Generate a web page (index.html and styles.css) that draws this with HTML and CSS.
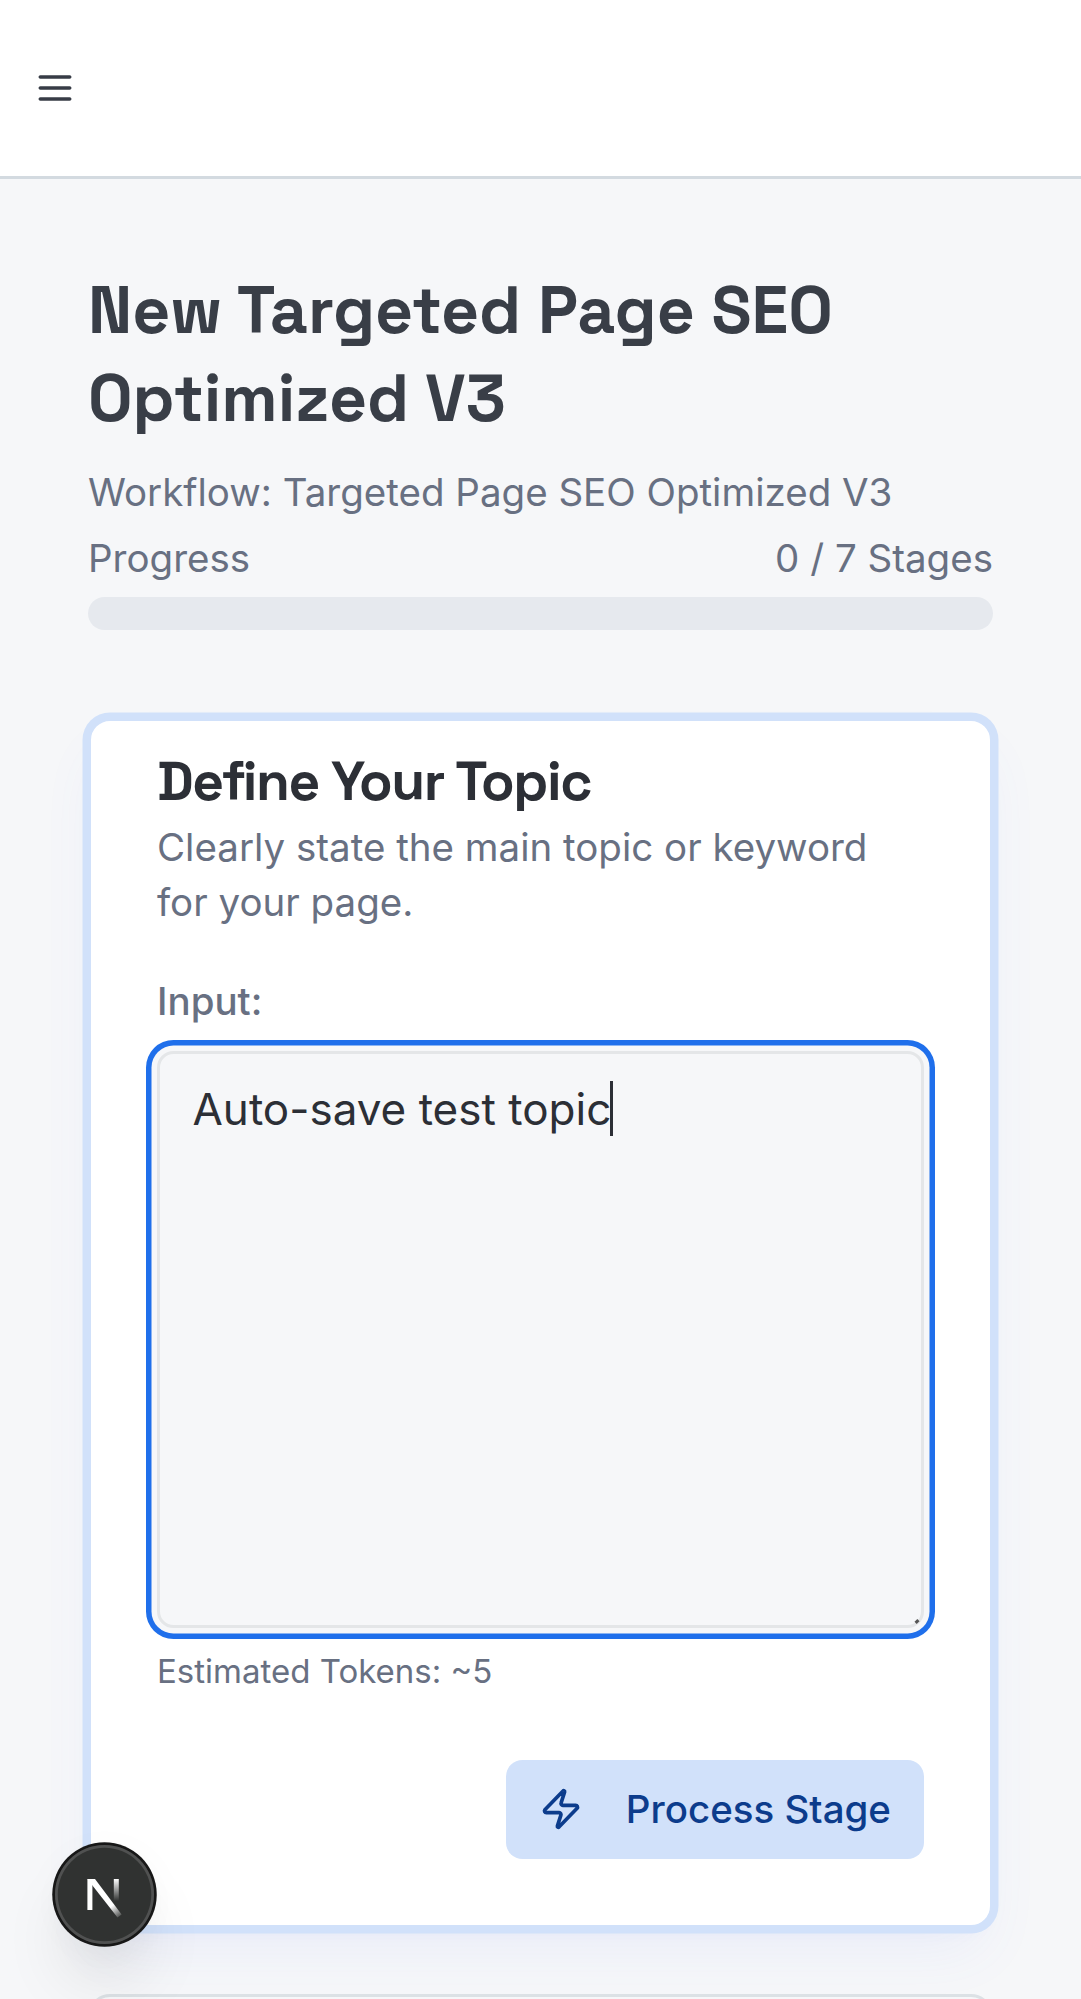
FILE: index.html
```html
<!DOCTYPE html>
<html lang="en">
<head>
<meta charset="utf-8">
<title>New Targeted Page SEO Optimized V3</title>
<link rel="stylesheet" href="styles.css">
</head>
<body>
<header class="topbar">
  <svg class="icon" viewBox="0 0 24 24"><path d="M4 12h16M4 6h16M4 18h16"/></svg>
</header>
<main class="page">
  <h1 class="title">New Targeted Page SEO Optimized V3</h1>
  <p class="workflow">Workflow: Targeted Page SEO Optimized V3</p>
  <div class="progress-head"><span>Progress</span><span>0 / 7 Stages</span></div>
  <div class="progress-bar"></div>
  <section class="card">
    <h2 class="card-title">Define Your Topic</h2>
    <p class="card-text">Clearly state the main topic or keyword for your page.</p>
    <div class="label">Input:</div>
    <div class="field"><span class="field-text">Auto-save test topic</span><span class="caret"></span><span class="grip"></span></div>
    <div class="tokens">Estimated Tokens: ~5</div>
    <div class="actions">
      <button class="button"><svg class="icon" viewBox="0 0 24 24"><path d="M4 14a1 1 0 0 1-.78-1.63l9.9-10.2a.5.5 0 0 1 .86.46l-1.92 6.02A1 1 0 0 0 13 10h7a1 1 0 0 1 .78 1.63l-9.9 10.2a.5.5 0 0 1-.86-.46l1.92-6.02A1 1 0 0 0 11 14z"/></svg><span>Process Stage</span></button>
    </div>
  </section>
  <section class="card-next"></section>
</main>
<div class="badge">
  <svg viewBox="0 0 99 99">
    <defs>
      <linearGradient id="diag" gradientUnits="userSpaceOnUse" x1="58" y1="60" x2="67.5" y2="72.5"><stop stop-color="#fff"/><stop offset="1" stop-color="#fff" stop-opacity="0"/></linearGradient>
      <linearGradient id="stem" gradientUnits="userSpaceOnUse" x1="0" y1="34" x2="0" y2="56"><stop stop-color="#fff"/><stop offset="1" stop-color="#fff" stop-opacity="0"/></linearGradient>
    </defs>
    <path d="M32.4 34h5v31h-5z" fill="#fff"/>
    <path d="M32.4 34h7.6L66.6 69.5 62.5 72.5 32.4 34z" fill="url(#diag)"/>
    <path d="M58.8 34h5v22h-5z" fill="url(#stem)"/>
  </svg>
</div>
</body>
</html>
```
FILE: styles.css
```css
* { box-sizing: border-box; }
body { margin: 0; height: 1999px; overflow: hidden; background: #f6f7f9; font-family: Inter, "Liberation Sans", sans-serif; color: #687082; font-size: 38.5px; line-height: 55px; }
h1, h2, p { margin: 0; }
.topbar { height: 179px; padding: 0 33px; display: flex; align-items: center; background: #fff; border-bottom: 3px solid #d3dae0; color: #373c46; }
.icon { width: 44px; height: 44px; flex: none; fill: none; stroke: currentColor; stroke-width: 2; stroke-linecap: round; stroke-linejoin: round; }
.page { height: 1820px; padding: 86.75px 88px 0; overflow: hidden; }
.title { color: #393e47; font-family: "Space Grotesk", Inter, sans-serif; font-size: 66px; line-height: 88px; font-weight: 700; margin-bottom: 23px; }
.workflow { margin-bottom: 11px; }
.progress-head { display: flex; justify-content: space-between; margin-bottom: 11px; }
.progress-bar { height: 33px; border-radius: 17px; background: #e6e9ee; margin-bottom: 87.75px; }
.card { height: 1210px; padding: 33.25px 66px 0; background: #fff; border: 3px solid #d1e1fa; border-radius: 22px; box-shadow: 0 0 0 5.5px #d1e1fa, 0 30px 60px -11px rgba(84, 112, 240, .08), 0 11px 16.5px -11px rgba(84, 112, 240, .08); }
.card-title { color: #2c2f36; font-family: "Space Grotesk", Inter, sans-serif; font-size: 55px; line-height: 55px; font-weight: 600; letter-spacing: -1.375px; margin-bottom: 11px; }
.card-text { margin-bottom: 44px; }
.label { font-weight: 500; margin-bottom: 22px; }
.field { position: relative; height: 577.5px; padding: 27px 32.5px; display: flex; background: #f6f7f9; border: 3px solid #e4e6e8; border-radius: 16.5px; box-shadow: 0 0 0 5.5px #f6f7f9, 0 0 0 11px #1f6feb; color: #2c2f36; font-size: 44px; line-height: 57px; margin-bottom: 20.5px; }
.caret { width: 3px; height: 55px; margin-left: -1px; background: #2c2f36; }
.grip { position: absolute; right: 2px; bottom: 2px; width: 4px; height: 3px; background: #555; transform: rotate(-45deg); }
.tokens { font-size: 33px; line-height: 44px; margin-bottom: 67px; }
.actions { display: flex; justify-content: flex-end; }
.button { width: 418px; height: 99px; padding: 0 33px; display: flex; align-items: center; justify-content: space-between; border: 0; border-radius: 16.5px; background: #d1e1fa; color: #0c3c8c; font: 500 38.5px/55px Inter, sans-serif; white-space: nowrap; }
.card-next { height: 200px; margin-top: 66px; border: 3px solid #dce1e5; border-radius: 22px; background: rgba(246, 247, 249, .45); }
.badge { position: fixed; left: 55px; top: 1845px; width: 99px; height: 99px; border-radius: 50%; background: #303231; box-shadow: 0 0 0 2.75px #171717, inset 0 0 0 2.75px #505151, 0 44px 66px -8px rgba(0, 0, 0, .1), 0 10px 44px rgba(0, 0, 0, .04); }
.badge svg { display: block; width: 99px; height: 99px; }
```
